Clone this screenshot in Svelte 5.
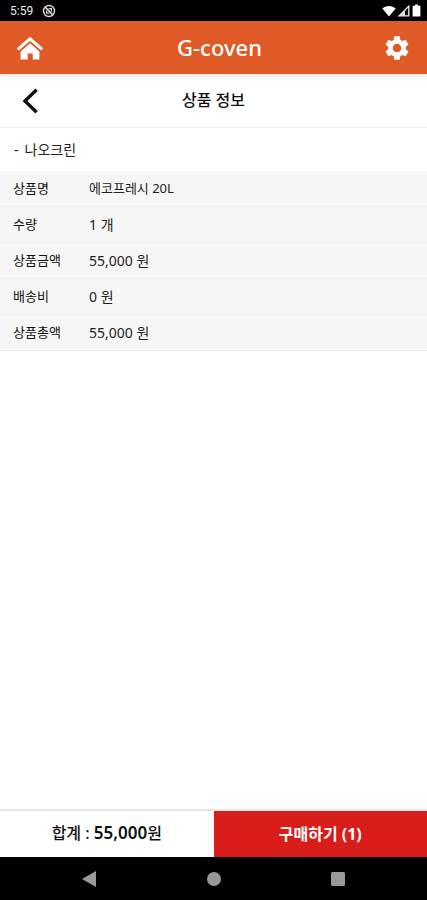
<script lang="ts">
    type Row = { label: string; value: string; numeric?: boolean };

    const title = 'G-coven';
    const seller = '나오크린';
    const count = 1;
    const total = '55,000';

    const rows: Row[] = [
        { label: '상품명', value: '에코프레시 20L' },
        { label: '수량', value: '1 개', numeric: true },
        { label: '상품금액', value: '55,000 원', numeric: true },
        { label: '배송비', value: '0 원', numeric: true },
        { label: '상품총액', value: '55,000 원', numeric: true }
    ];
</script>

<div class="screen">
    <div class="status">
        <span class="clock">5:59</span>
        <svg width="14" height="14" viewBox="0 0 14 14" fill="none" stroke="#dcdcdc">
            <circle cx="7" cy="7" r="5.5" stroke-width="1.4" />
            <path d="M3.4 3.4 10.6 10.6" stroke-width="1.5" />
            <path d="M4.6 6.4v2.8h2.6M6.6 4.6h2.8v2.8" stroke-width="1.2" />
        </svg>
        <div class="signals">
            <svg width="14" height="12" viewBox="0 0 14 12" fill="#fff">
                <path d="M0.3 3.6C4 .2 10 .2 13.7 3.6L7 11.6z" />
            </svg>
            <svg width="12" height="12" viewBox="0 0 12 12">
                <path d="M10.8 1.2v9.6H1.2z" fill="none" stroke="#f2f2f2" stroke-width="1.3" />
                <path d="M7 5v6H1z" fill="#ddd" />
            </svg>
            <svg width="9" height="13" viewBox="0 0 9 13" fill="#fff">
                <path d="M3 0.5h3v1.3h2.4v10.7H.6V1.8H3z" />
            </svg>
        </div>
    </div>

    <header>
        <button class="icon" aria-label="홈">
            <svg width="28" height="24" viewBox="0 0 28 24">
                <path d="M1.8 13.4 14 2.8l12.2 10.6" fill="none" stroke="#fff" stroke-width="3" />
                <path d="M14 7.2 23.4 15.4V23.4h-6.6v-6h-5.2v6H4.6v-8z" fill="#fff" />
            </svg>
        </button>
        <h1>{title}</h1>
        <button class="icon" aria-label="설정">
            <svg width="28" height="28" viewBox="0 0 24 24" fill="#fff">
                <path
                    d="M19.43 12.98c.04-.32.07-.64.07-.98s-.03-.66-.07-.98l2.11-1.65c.19-.15.24-.42.12-.64l-2-3.46c-.12-.22-.39-.3-.61-.22l-2.49 1c-.52-.4-1.08-.73-1.69-.98l-.38-2.65C14.46 2.18 14.25 2 14 2h-4c-.25 0-.46.18-.49.42l-.38 2.65c-.61.25-1.17.59-1.69.98l-2.49-1c-.23-.09-.49 0-.61.22l-2 3.46c-.13.22-.07.49.12.64l2.11 1.65c-.04.32-.07.65-.07.98s.03.66.07.98l-2.11 1.65c-.19.15-.24.42-.12.64l2 3.46c.12.22.39.3.61.22l2.49-1c.52.4 1.08.73 1.69.98l.38 2.65c.03.24.24.42.49.42h4c.25 0 .46-.18.49-.42l.38-2.65c.61-.25 1.17-.59 1.69-.98l2.49 1c.23.09.49 0 .61-.22l2-3.46c.12-.22.07-.49-.12-.64l-2.11-1.65zM12 15.7a3.7 3.7 0 1 1 0-7.4 3.7 3.7 0 0 1 0 7.4z"
                />
            </svg>
        </button>
    </header>

    <div class="subheader">
        <button class="icon" aria-label="뒤로">
            <svg width="28" height="28" viewBox="0 0 28 28" fill="none" stroke="#111" stroke-width="3.4">
                <path d="M20.6 2.8 9 14l11.6 11.2" />
            </svg>
        </button>
        <h2>상품 정보</h2>
    </div>

    <main>
        <h3><span>-</span>{seller}</h3>
        <table>
            <tbody>
                {#each rows as row}
                    <tr>
                        <th scope="row">{row.label}</th>
                        <td class:numeric={row.numeric}>{row.value}</td>
                    </tr>
                {/each}
            </tbody>
        </table>
    </main>

    <footer>
        <div class="total">합계 : <span>{total}</span>원</div>
        <button class="buy">구매하기 ({count})</button>
    </footer>

    <nav>
        <button aria-label="뒤로 가기">
            <svg width="16" height="18" viewBox="0 0 16 18" fill="#999">
                <path d="M14 1v16L0 9z" />
            </svg>
        </button>
        <button aria-label="홈 화면">
            <svg width="16" height="16" viewBox="0 0 16 16" fill="#999">
                <circle cx="8" cy="8" r="7" />
            </svg>
        </button>
        <button aria-label="최근 앱">
            <svg width="16" height="16" viewBox="0 0 16 16" fill="#999">
                <rect x="1" y="1" width="14" height="14" rx="1.5" />
            </svg>
        </button>
    </nav>
</div>

<style>
    :global(body) {
        margin: 0;
        background: #fff;
    }

    .screen {
        display: flex;
        flex-direction: column;
        min-height: 100vh;
        font-family: 'Noto Sans', 'Noto Sans CJK KR', sans-serif;
        color: #222;
    }

    svg {
        display: block;
    }

    button {
        display: flex;
        align-items: center;
        justify-content: center;
        padding: 0;
        border: 0;
        background: none;
        font-family: inherit;
    }

    .status {
        display: flex;
        align-items: center;
        gap: 9px;
        height: 21px;
        padding: 0 6px 0 10px;
        background: #000;
        color: #e8e8e8;
    }

    .clock {
        font: 12px/20px Roboto, sans-serif;
    }

    .signals {
        display: flex;
        align-items: center;
        gap: 2px;
        margin-left: auto;
    }

    header {
        display: grid;
        grid-template-columns: 60px 1fr 60px;
        align-items: center;
        height: 53px;
        background: #df5a26;
        box-shadow: 0 1px 4px rgba(0, 0, 0, 0.15);
    }

    .icon {
        height: 52px;
    }

    h1 {
        margin: 0 0 0 12px;
        padding-bottom: 2px;
        font-size: 22px;
        line-height: 50px;
        font-weight: 500;
        text-align: center;
        color: #fff;
    }

    header h1 {
        margin-right: 0;
    }

    .subheader {
        display: grid;
        grid-template-columns: 60px 1fr 60px;
        align-items: center;
        height: 53px;
        border-bottom: 1px solid #ececec;
    }

    h2 {
        margin: 0;
        padding-bottom: 2px;
        font-size: 16px;
        line-height: 50px;
        font-weight: 500;
        text-align: center;
        color: #111;
    }

    main {
        flex: 1;
    }

    h3 {
        display: flex;
        gap: 6px;
        margin: 0;
        padding-left: 14px;
        font-size: 14px;
        line-height: 43px;
        font-weight: 400;
    }

    table {
        width: 100%;
        border-collapse: separate;
        border-spacing: 0;
        background: #f6f6f6;
        font-size: 13px;
        line-height: 35px;
        text-align: left;
    }

    th,
    td {
        height: 35px;
        padding: 0;
        border-bottom: 1px solid #ececec;
    }

    th {
        width: 76px;
        padding-left: 13px;
        font-weight: 400;
        color: #111;
    }

    .numeric {
        font-size: 14px;
    }

    footer {
        display: flex;
        height: 46px;
        border-top: 2px solid #e6e6e6;
        font-size: 16px;
    }

    .total {
        flex: 1;
        line-height: 44px;
        font-weight: 500;
        text-align: center;
        color: #111;
    }

    .total span {
        font-size: 17px;
        font-weight: 600;
    }

    .buy {
        flex: 1;
        padding-bottom: 2px;
        background: #d91d1a;
        color: #fff;
        font-size: 16px;
        font-weight: 700;
    }

    nav {
        display: flex;
        align-items: center;
        justify-content: center;
        height: 43px;
        background: #000;
    }

    nav button {
        width: 124px;
        height: 43px;
    }
</style>
